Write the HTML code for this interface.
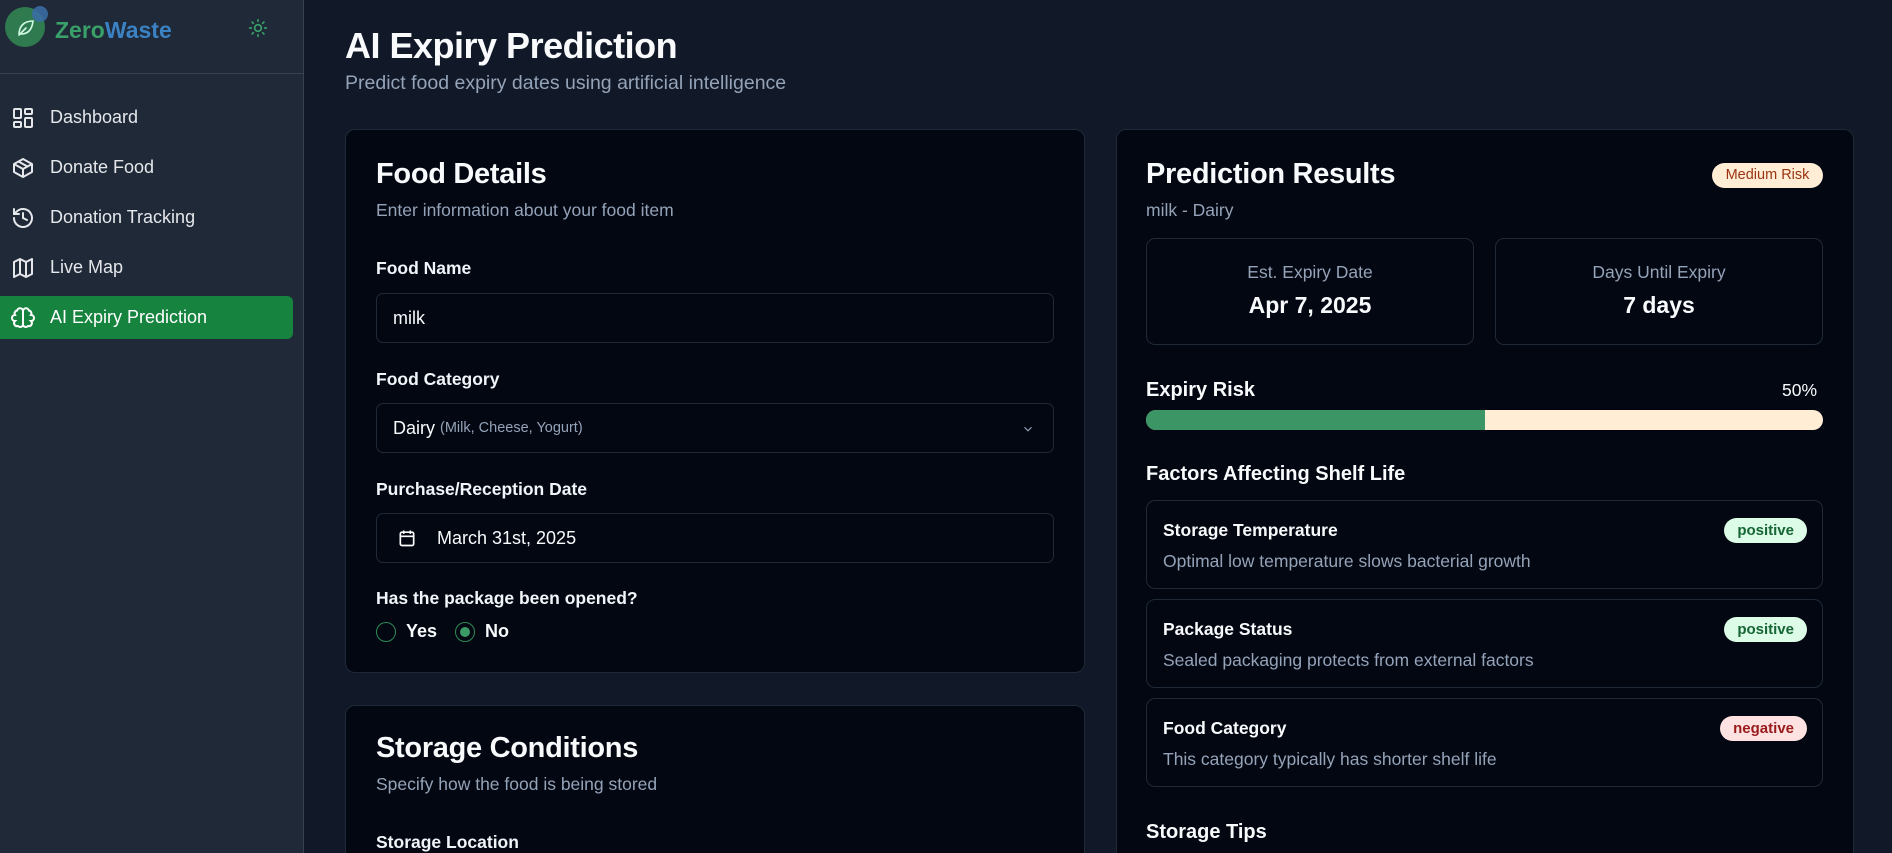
<!DOCTYPE html>
<html style="overflow:hidden;width:1892px;height:853px"><head><meta charset="utf-8"><style>
*{box-sizing:border-box;margin:0;padding:0}
body{width:1892px;height:853px;overflow:hidden;background:#111827;font-family:"Liberation Sans",sans-serif;color:#f8fafc;position:relative}
.a{position:absolute;white-space:nowrap}
#side{position:absolute;left:0;top:0;width:304px;height:853px;background:#1f2937;border-right:1px solid #374151}
.nav{position:absolute;left:0;width:293px;height:43px;display:flex;align-items:center;font-size:18px;color:#e5e7eb;border-radius:0 6px 6px 0}
.nav svg{position:absolute;left:11px}
.nav span{position:absolute;left:50px}
.card{position:absolute;background:#030712;border:1px solid #1f2937;border-radius:10px}
.h2{font-size:29px;font-weight:bold;letter-spacing:-0.3px}
.sub{font-size:17.5px;color:#94a3b8}
.lbl{font-size:17.5px;font-weight:bold;color:#f1f5f9}
.inp{position:absolute;left:376px;width:678px;height:50px;border:1px solid #1f2937;border-radius:7px;background:#030712;font-size:18px;display:flex;align-items:center}
.box{position:absolute;border:1px solid #1f2937;border-radius:9px}
.fac{position:absolute;left:1146px;width:677px;height:89px;border:1px solid #1f2937;border-radius:9px}
.fac .t{position:absolute;left:16px;top:19px;font-size:17.5px;font-weight:bold}
.fac .d{position:absolute;left:16px;top:50px;font-size:17.5px;color:#94a3b8}
.pill{position:absolute;right:15px;top:17px;height:25px;border-radius:13px;font-size:15px;font-weight:bold;padding:0 13px;line-height:25px}
.pos{background:#dcfce7;color:#166534}
.neg{background:#fee2e2;color:#991b1b}
</style></head><body>
<div id="side">
  <svg class="a" style="left:4px;top:4px" width="48" height="48" viewBox="0 0 48 48">
    <circle cx="21" cy="23" r="20" fill="#2f7a4f"/><circle cx="36" cy="10" r="8" fill="#3b6fa8" opacity=".85"/>
    <path d="M15 31c0-9 5-14 14-14-1 9-5 13-12 13M15 31l7-7" stroke="#d1fae5" stroke-width="1.6" fill="none" stroke-linecap="round"/>
  </svg>
  <div class="a" style="left:55px;top:17px;font-size:23px;font-weight:bold"><span style="color:#3aa06a">Zero</span><span style="color:#3b82c4">Waste</span></div>
  <svg class="a" style="left:248px;top:18px" width="20" height="20" viewBox="0 0 24 24" fill="none" stroke="#3aa06a" stroke-width="2" stroke-linecap="round"><circle cx="12" cy="12" r="4"/><path d="M12 2v2M12 20v2M4.9 4.9l1.4 1.4M17.7 17.7l1.4 1.4M2 12h2M20 12h2M4.9 19.1l1.4-1.4M17.7 6.3l1.4-1.4"/></svg>
  <div class="a" style="left:0;top:73px;width:304px;height:1px;background:#374151"></div>
  <div class="nav" style="top:96px"><svg width="24" height="24" viewBox="0 0 24 24" fill="none" stroke="#e5e7eb" stroke-width="2"><rect x="3" y="3" width="7" height="9" rx="1"/><rect x="14" y="3" width="7" height="5" rx="1"/><rect x="14" y="12" width="7" height="9" rx="1"/><rect x="3" y="16" width="7" height="5" rx="1"/></svg><span>Dashboard</span></div>
  <div class="nav" style="top:146px"><svg width="24" height="24" viewBox="0 0 24 24" fill="none" stroke="#e5e7eb" stroke-width="2" stroke-linejoin="round"><path d="M21 8l-9-5-9 5v8l9 5 9-5z"/><path d="M3 8l9 5 9-5M12 13v8M7.5 5.5l9 5"/></svg><span>Donate Food</span></div>
  <div class="nav" style="top:196px"><svg width="24" height="24" viewBox="0 0 24 24" fill="none" stroke="#e5e7eb" stroke-width="2" stroke-linecap="round"><path d="M3 12a9 9 0 1 0 3-6.7L3 8M3 3v5h5M12 7v5l4 2"/></svg><span>Donation Tracking</span></div>
  <div class="nav" style="top:246px"><svg width="24" height="24" viewBox="0 0 24 24" fill="none" stroke="#e5e7eb" stroke-width="2" stroke-linejoin="round"><path d="M3 6l6-3 6 3 6-3v15l-6 3-6-3-6 3zM9 3v15M15 6v15"/></svg><span>Live Map</span></div>
  <div class="nav" style="top:296px;background:#16843f;color:#fff"><svg width="24" height="24" viewBox="0 0 24 24" fill="none" stroke="#fff" stroke-width="2" stroke-linecap="round"><path d="M12 5a3 3 0 0 0-5.9-.5A3 3 0 0 0 4 9a3 3 0 0 0 0 6 3 3 0 0 0 3 5 3 3 0 0 0 5-1zM12 5a3 3 0 0 1 5.9-.5A3 3 0 0 1 20 9a3 3 0 0 1 0 6 3 3 0 0 1-3 5 3 3 0 0 1-5-1zM12 5v14"/></svg><span>AI Expiry Prediction</span></div>
</div>

<div class="a" style="left:345px;top:25px;font-size:36px;font-weight:bold;letter-spacing:-0.5px">AI Expiry Prediction</div>
<div class="a" style="left:345px;top:72px;font-size:19.5px;color:#94a3b8">Predict food expiry dates using artificial intelligence</div>

<div class="card" style="left:345px;top:129px;width:740px;height:544px"></div>
<div class="a h2" style="left:376px;top:158px">Food Details</div>
<div class="a sub" style="left:376px;top:200px">Enter information about your food item</div>
<div class="a lbl" style="left:376px;top:258px">Food Name</div>
<div class="inp" style="top:293px;padding-left:16px">milk</div>
<div class="a lbl" style="left:376px;top:369px">Food Category</div>
<div class="inp" style="top:403px;padding-left:16px">Dairy&nbsp;<span style="font-size:14.5px;color:#94a3b8">(Milk, Cheese, Yogurt)</span>
<svg class="a" style="left:644px;top:18px" width="14" height="14" viewBox="0 0 24 24" fill="none" stroke="#94a3b8" stroke-width="2"><path d="M6 9l6 6 6-6"/></svg></div>
<div class="a lbl" style="left:376px;top:479px">Purchase/Reception Date</div>
<div class="inp" style="top:513px;padding-left:60px">March 31st, 2025
<svg class="a" style="left:20px;top:14px" width="20" height="20" viewBox="0 0 24 24" fill="none" stroke="#fff" stroke-width="2"><rect x="4" y="5" width="16" height="16" rx="2"/><path d="M8 3v4M16 3v4M4 10h16"/></svg></div>
<div class="a lbl" style="left:376px;top:588px">Has the package been opened?</div>
<div class="a" style="left:376px;top:622px;width:20px;height:20px;border:1.5px solid #2f8a55;border-radius:50%"></div>
<div class="a" style="left:406px;top:621px;font-size:18px;font-weight:bold">Yes</div>
<div class="a" style="left:455px;top:622px;width:20px;height:20px;border:1.5px solid #2f8a55;border-radius:50%"><div style="margin:3.5px;width:10px;height:10px;border-radius:50%;background:#3b9a66"></div></div>
<div class="a" style="left:485px;top:621px;font-size:18px;font-weight:bold">No</div>

<div class="card" style="left:345px;top:705px;width:740px;height:160px;border-bottom:none;border-radius:10px 10px 0 0"></div>
<div class="a h2" style="left:376px;top:732px">Storage Conditions</div>
<div class="a sub" style="left:376px;top:774px">Specify how the food is being stored</div>
<div class="a lbl" style="left:376px;top:832px">Storage Location</div>

<div class="card" style="left:1116px;top:129px;width:738px;height:740px;border-bottom:none;border-radius:10px 10px 0 0"></div>
<div class="a h2" style="left:1146px;top:158px">Prediction Results</div>
<div class="a" style="left:1712px;top:163px;width:111px;height:25px;border-radius:13px;background:#ffedd5;color:#9a3412;font-size:14.5px;text-align:center;line-height:25px">Medium Risk</div>
<div class="a sub" style="left:1146px;top:200px">milk - Dairy</div>
<div class="box" style="left:1146px;top:238px;width:328px;height:107px"><div class="a" style="width:100%;top:23px;text-align:center;font-size:17.5px;color:#94a3b8">Est. Expiry Date</div><div class="a" style="width:100%;top:53px;text-align:center;font-size:23px;font-weight:bold">Apr 7, 2025</div></div>
<div class="box" style="left:1495px;top:238px;width:328px;height:107px"><div class="a" style="width:100%;top:23px;text-align:center;font-size:17.5px;color:#94a3b8">Days Until Expiry</div><div class="a" style="width:100%;top:53px;text-align:center;font-size:23px;font-weight:bold">7 days</div></div>
<div class="a" style="left:1146px;top:379px;font-size:20px;font-weight:bold">Expiry Risk</div>
<div class="a" style="left:1782px;top:380px;font-size:17.5px">50%</div>
<div class="a" style="left:1146px;top:410px;width:677px;height:20px;border-radius:10px;background:#ffedd5;overflow:hidden"><div style="width:339px;height:20px;background:#3b9565"></div></div>
<div class="a" style="left:1146px;top:463px;font-size:20px;font-weight:bold">Factors Affecting Shelf Life</div>
<div class="fac" style="top:500px"><div class="t">Storage Temperature</div><div class="d">Optimal low temperature slows bacterial growth</div><div class="pill pos">positive</div></div>
<div class="fac" style="top:599px"><div class="t">Package Status</div><div class="d">Sealed packaging protects from external factors</div><div class="pill pos">positive</div></div>
<div class="fac" style="top:698px"><div class="t">Food Category</div><div class="d">This category typically has shorter shelf life</div><div class="pill neg">negative</div></div>
<div class="a" style="left:1146px;top:821px;font-size:20px;font-weight:bold">Storage Tips</div>
</body></html>
